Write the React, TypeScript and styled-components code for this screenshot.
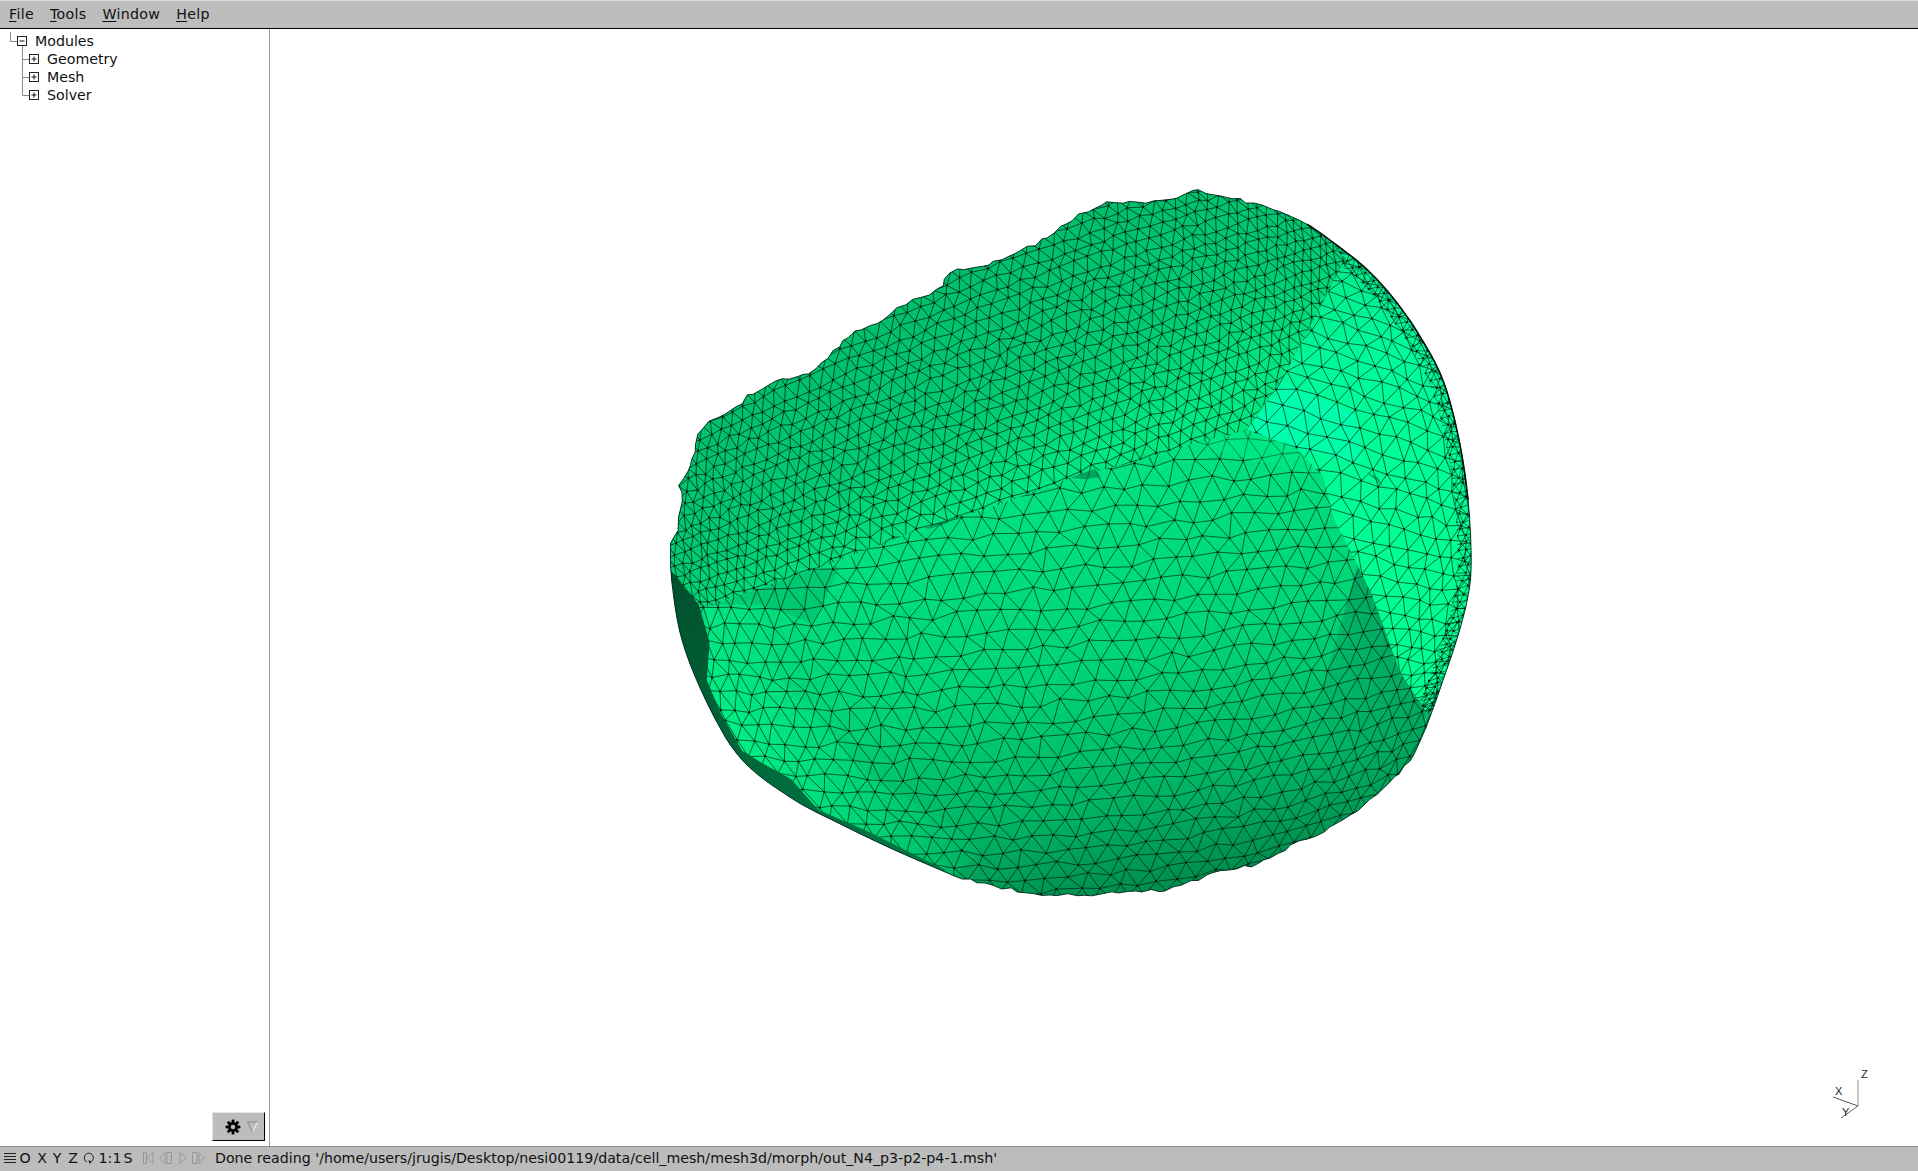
import React, { useMemo } from "react";
import styled, { createGlobalStyle } from "styled-components";

type P = [number, number];

const GlobalStyle = createGlobalStyle`
  html, body { margin: 0; padding: 0; height: 100%; background: #fff; overflow: hidden; }
  #root { height: 100%; }
`;

const Window = styled.div`
  height: 100vh;
  display: flex;
  flex-direction: column;
  font-family: "DejaVu Sans", sans-serif;
  font-size: 14.2px;
  color: #111;
`;

const MenuBar = styled.div`
  flex: none;
  height: 29px;
  box-sizing: border-box;
  display: flex;
  align-items: center;
  gap: 16px;
  padding: 0 0 1px 9px;
  background: #bdbdbd;
  border-top: 1px solid #dedede;
  border-bottom: 1px solid #000;
`;

const MenuItem = styled.span`
  line-height: 26px;
  letter-spacing: 0.3px;
`;

const Key = styled.span`
  text-decoration: underline;
  text-underline-offset: 2px;
`;

const Body = styled.div`
  flex: 1;
  min-height: 0;
  display: flex;
`;

const Side = styled.aside`
  flex: none;
  width: 270px;
  box-sizing: border-box;
  border-right: 1px solid #9c9c9c;
  display: flex;
  flex-direction: column;
  padding: 3px 4px 5px 0;
`;

const Tree = styled.div`
  display: flex;
  flex-direction: column;
`;

const TreeRow = styled.div`
  height: 18px;
  display: flex;
  align-items: center;
  line-height: 18px;
`;

const TreeIcon = styled.svg`
  flex: none;
  display: block;
  margin-right: 8px;
`;

const GearButton = styled.button`
  margin-top: auto;
  align-self: flex-end;
  width: 53px;
  height: 29px;
  box-sizing: border-box;
  padding: 0 6px 0 12px;
  display: flex;
  align-items: center;
  justify-content: space-between;
  background: #bdbdbd;
  border: 1px solid;
  border-color: #e4e4e4 #000 #000 #e4e4e4;
`;

const Canvas = styled.main`
  flex: 1;
  min-width: 0;
  background: #fff;
`;

const Scene = styled.svg`
  display: block;
  width: 100%;
  height: 100%;
`;

const StatusBar = styled.footer`
  flex: none;
  height: 25px;
  box-sizing: border-box;
  display: flex;
  align-items: center;
  padding: 0 0 2px 3px;
  background: #bcbcbc;
  border-top: 1px solid #8d8d8d;
`;

const StatusGlyph = styled.span<{ $w: number; $gap?: number }>`
  flex: none;
  width: ${(p) => p.$w}px;
  margin-left: ${(p) => p.$gap ?? 0}px;
  line-height: 22px;
  display: flex;
  justify-content: center;
  align-items: center;
`;

const StatusText = styled.span`
  margin-left: 10px;
  white-space: nowrap;
  line-height: 22px;
`;

const AxisLabel = styled.text`
  font-family: "Liberation Sans", sans-serif;
  font-size: 11px;
  fill: #222;
`;

function rng(seed: number) {
  let s = seed >>> 0;
  return () => {
    s = (s + 0x6d2b79f5) >>> 0;
    let t = s;
    t = Math.imul(t ^ (t >>> 15), t | 1);
    t ^= t + Math.imul(t ^ (t >>> 7), t | 61);
    return ((t ^ (t >>> 14)) >>> 0) / 4294967296;
  };
}

const Z = (pts: P[]): P[] => pts.map(([x, y]) => [650 + x / 1.842, 170 + y / 2.118]);
const str = (pts: P[]) => pts.map((p) => `${p[0].toFixed(1)},${p[1].toFixed(1)}`).join(" ");

function rough(pts: P[], amp: number, seed: number): P[] {
  const r = rng(seed);
  const out: P[] = [];
  for (let i = 0; i < pts.length - 1; i++) {
    const [a, b] = [pts[i], pts[i + 1]];
    const n = Math.max(1, Math.round(Math.hypot(b[0] - a[0], b[1] - a[1]) / 8));
    for (let k = 0; k < n; k++) {
      const t = k / n;
      out.push([a[0] + (b[0] - a[0]) * t + (r() - 0.5) * amp, a[1] + (b[1] - a[1]) * t + (r() - 0.5) * amp]);
    }
  }
  out.push(pts[pts.length - 1]);
  return out;
}

function smooth(pts: P[]): P[] {
  const out: P[] = [];
  for (let i = 0; i < pts.length - 1; i++) {
    const p0 = pts[Math.max(0, i - 1)];
    const p1 = pts[i];
    const p2 = pts[i + 1];
    const p3 = pts[Math.min(pts.length - 1, i + 2)];
    for (let k = 0; k < 6; k++) {
      const t = k / 6;
      const c = (a: number, b: number, d: number, e: number) =>
        0.5 * (2 * b + (d - a) * t + (2 * a - 5 * b + 4 * d - e) * t * t + (3 * b - a - 3 * d + e) * t * t * t);
      out.push([c(p0[0], p1[0], p2[0], p3[0]), c(p0[1], p1[1], p2[1], p3[1])]);
    }
  }
  out.push(pts[pts.length - 1]);
  return out;
}

const TOP: P[] = Z([[38,790],[55,750],[52,735],[60,700],[55,670],[70,640],[85,580],[95,545],[125,525],[155,505],[180,480],[230,450],[295,430],[340,385],[375,340],[420,325],[470,285],[540,245],[550,215],[610,205],[660,185],[720,150],[780,105],[830,70],[900,70],[970,62],[1000,42],[1040,50],[1100,68],[1160,88]]);
const RIGHT: P[] = Z([[1160,88],[1210,115],[1260,155],[1320,210],[1375,280],[1425,365],[1462,450],[1488,560],[1505,680],[1512,790],[1510,880],[1490,980],[1455,1100],[1430,1180]]);
const BOTTOM: P[] = Z([[1410,1240],[1360,1300],[1300,1360],[1240,1400],[1180,1430],[1120,1470],[1040,1490],[950,1525],[880,1530],[800,1535],[720,1535],[650,1520],[560,1495]]);
const LEFT: P[] = Z([[560,1495],[450,1440],[350,1385],[260,1330],[170,1250],[110,1140],[60,1000],[40,870],[38,790]]);

const SMOOTH_RIGHT = smooth(RIGHT);
const OUTLINE: P[] = [...rough(TOP, 3.8, 11), ...SMOOTH_RIGHT, ...rough(BOTTOM, 3.2, 23), ...smooth(LEFT)];

const inset = (pts: P[], k: number): P[] =>
  pts.map(([x, y]) => [1130 + (x - 1130) * k, 520 + (y - 520) * k] as P).reverse();
const EDGE_BAND: P[] = [...SMOOTH_RIGHT, ...inset(SMOOTH_RIGHT, 0.96)];

const UPPER: P[] = Z([[0,700],[0,0],[1240,0],[1240,130],[1280,190],[1230,300],[1170,430],[1100,550],[1000,580],[870,625],[780,650],[640,710],[500,760],[340,830],[190,890],[110,925],[90,920],[40,850],[0,850]]);
const RIGHTFACE: P[] = Z([[1240,130],[1240,0],[1600,0],[1600,1200],[1430,1150],[1380,1060],[1330,900],[1300,830],[1260,740],[1240,650],[1190,590],[1100,550],[1170,430],[1230,300],[1280,190]]);
const DARK: P[] = Z([[0,840],[40,850],[90,920],[110,1000],[105,1080],[130,1150],[170,1230],[205,1255],[260,1290],[310,1355],[400,1400],[540,1480],[565,1510],[300,1500],[0,1200]]);
const GLOW: P[] = Z([[100,930],[190,890],[240,1080],[400,1280],[620,1430],[560,1495],[540,1480],[400,1400],[310,1355],[260,1290],[205,1255],[170,1230],[130,1150],[105,1080],[110,1000]]);
const SHADE: P[] = Z([[1305,830],[1430,1150],[1400,1300],[1180,1300],[1250,1050]]);
const HILITE: P[] = Z([[1100,550],[1170,450],[1300,520],[1310,620],[1190,590]]);
const CREASE: P[] = Z([[1100,550],[1190,590],[1240,650],[1130,620],[1000,580]]);
const DENT: P[] = Z([[120,920],[290,850],[350,840],[300,960],[200,920]]);
const NOTCHES: P[][] = [
  Z([[775,652],[820,632],[830,650],[800,655]]),
  Z([[505,758],[555,738],[548,748],[515,760]]),
  Z([[1320,640],[1350,670],[1340,650]]),
];

function mesh(o: { spacing: number; angle: number; cx: number; cy: number; R: number; seed: number }) {
  const { spacing, angle, cx, cy, R, seed } = o;
  const r = rng(seed);
  const ca = Math.cos(angle);
  const sa = Math.sin(angle);
  const rowH = spacing * 0.866;
  const N = Math.ceil((R * 1.7) / spacing);
  const pts = new Map<string, P | null>();
  const key = (i: number, j: number) => `${i}:${j}`;
  for (let j = -N; j <= N; j++) {
    for (let i = -N; i <= N; i++) {
      const lx = (i + (j & 1) * 0.5) * spacing + (r() - 0.5) * spacing * 0.36;
      const ly = j * rowH + (r() - 0.5) * spacing * 0.36;
      const dx = lx * ca - ly * sa;
      const dy = lx * sa + ly * ca;
      const d = Math.hypot(dx, dy);
      const a = d / R;
      if (a >= 1.5) {
        pts.set(key(i, j), null);
        continue;
      }
      const s = d === 0 ? 1 : (R * Math.sin(a)) / d;
      pts.set(key(i, j), [cx + dx * s, cy + dy * s]);
    }
  }
  let edges = "";
  let nodes = "";
  const f = (p: P) => `${p[0].toFixed(1)} ${p[1].toFixed(1)}`;
  for (let j = -N; j <= N; j++) {
    for (let i = -N; i <= N; i++) {
      const p = pts.get(key(i, j));
      if (!p) continue;
      nodes += `M${f(p)}h0`;
      const odd = j & 1;
      const nb = [key(i + 1, j), key(i + (odd ? 1 : 0), j + 1), key(i + (odd ? 0 : -1), j + 1)];
      for (const k of nb) {
        const q = pts.get(k);
        if (q) edges += `M${f(p)}L${f(q)}`;
      }
    }
  }
  return { edges, nodes };
}

function Mesh({ data, w = 0.75 }: { data: { edges: string; nodes: string }; w?: number }) {
  return (
    <g fill="none" stroke="#04140c">
      <path d={data.edges} strokeWidth={w} strokeOpacity={0.85} />
      <path d={data.nodes} strokeWidth={2} strokeLinecap="round" />
    </g>
  );
}

function Body3D() {
  const upper = useMemo(() => mesh({ spacing: 14.5, angle: -0.36, cx: 1010, cy: 430, R: 430, seed: 5 }), []);
  const main = useMemo(() => mesh({ spacing: 22.5, angle: -0.08, cx: 1060, cy: 530, R: 470, seed: 9 }), []);
  const right = useMemo(() => mesh({ spacing: 21, angle: 1.3, cx: 1250, cy: 490, R: 290, seed: 17 }), []);
  const band = useMemo(() => mesh({ spacing: 9, angle: 0.9, cx: 1300, cy: 400, R: 500, seed: 31 }), []);
  return (
    <>
      <defs>
        <clipPath id="outline"><polygon points={str(OUTLINE)} /></clipPath>
        <clipPath id="upper"><polygon points={str(UPPER)} /></clipPath>
        <clipPath id="right"><polygon points={str(RIGHTFACE)} /></clipPath>
        <clipPath id="dark"><polygon points={str(DARK)} /></clipPath>
        <clipPath id="band"><polygon points={str(EDGE_BAND)} /></clipPath>
        <linearGradient id="mainFill" gradientUnits="userSpaceOnUse" x1="1030" y1="440" x2="1130" y2="890">
          <stop offset="0" stopColor="#00e782" />
          <stop offset="0.5" stopColor="#00d576" />
          <stop offset="0.8" stopColor="#00b564" />
          <stop offset="1" stopColor="#008f4e" />
        </linearGradient>
        <linearGradient id="upperFill" gradientUnits="userSpaceOnUse" x1="900" y1="280" x2="1010" y2="500">
          <stop offset="0" stopColor="#00bd6a" />
          <stop offset="0.65" stopColor="#00cc72" />
          <stop offset="1" stopColor="#00e880" />
        </linearGradient>
        <linearGradient id="rightFill" gradientUnits="userSpaceOnUse" x1="1290" y1="260" x2="1440" y2="600">
          <stop offset="0" stopColor="#00e98a" />
          <stop offset="0.35" stopColor="#00fb9a" />
          <stop offset="1" stopColor="#00ff90" />
        </linearGradient>
        <linearGradient id="glowFill" gradientUnits="userSpaceOnUse" x1="720" y1="760" x2="860" y2="660">
          <stop offset="0" stopColor="#00f58a" />
          <stop offset="1" stopColor="#00e07c" stopOpacity="0" />
        </linearGradient>
        <linearGradient id="shadeFill" gradientUnits="userSpaceOnUse" x1="1420" y1="650" x2="1310" y2="740">
          <stop offset="0" stopColor="#009a58" stopOpacity="0.75" />
          <stop offset="1" stopColor="#009a58" stopOpacity="0" />
        </linearGradient>
        <linearGradient id="darkFill" gradientUnits="userSpaceOnUse" x1="680" y1="560" x2="960" y2="890">
          <stop offset="0" stopColor="#004f2c" />
          <stop offset="0.5" stopColor="#006a3c" />
          <stop offset="1" stopColor="#007a44" />
        </linearGradient>
      </defs>
      <g clipPath="url(#outline)">
        <rect x="600" y="150" width="950" height="800" fill="url(#mainFill)" />
        <polygon points={str(GLOW)} fill="url(#glowFill)" />
        <polygon points={str(SHADE)} fill="url(#shadeFill)" />
        <polygon points={str(DENT)} fill="#00b868" opacity={0.55} />
        <Mesh data={main} />
        <g clipPath="url(#dark)">
          <polygon points={str(DARK)} fill="url(#darkFill)" />
          <Mesh data={band} w={0.7} />
        </g>
        <g clipPath="url(#right)">
          <polygon points={str(RIGHTFACE)} fill="url(#rightFill)" />
          <polygon points={str(HILITE)} fill="#00ffb0" opacity={0.8} />
          <Mesh data={right} />
          <g clipPath="url(#band)">
            <Mesh data={band} w={0.65} />
          </g>
        </g>
        <polygon points={str(CREASE)} fill="#00f088" opacity={0.35} />
        <g clipPath="url(#upper)">
          <polygon points={str(UPPER)} fill="url(#upperFill)" />
          <Mesh data={upper} w={0.8} />
        </g>
        {NOTCHES.map((n, i) => (
          <polygon key={i} points={str(n)} fill="#007a48" opacity={0.6} />
        ))}
      </g>
      <polygon points={str(OUTLINE)} fill="none" stroke="#03241a" strokeWidth={0.9} />
      <polyline points={str(SMOOTH_RIGHT.slice(6, 50))} fill="none" stroke="#02130c" strokeWidth={1.6} />
    </>
  );
}

function Axes() {
  return (
    <g>
      <line x1="1858" y1="1080" x2="1858" y2="1106" stroke="#bcbcbc" strokeWidth={1.6} />
      <line x1="1833" y1="1097" x2="1858" y2="1106" stroke="#555" strokeWidth={1} />
      <line x1="1841" y1="1118" x2="1858" y2="1106" stroke="#666" strokeWidth={1} />
      <AxisLabel x="1861" y="1078">Z</AxisLabel>
      <AxisLabel x="1835" y="1095">X</AxisLabel>
      <AxisLabel x="1842" y="1116">Y</AxisLabel>
    </g>
  );
}

function BranchIcon({ root, last }: { root?: boolean; last?: boolean }) {
  const plus = !root;
  const w = root ? 27 : 39;
  const bx = root ? 17.5 : 29.5;
  return (
    <TreeIcon width={w} height={18} viewBox={`0 0 ${w} 18`}>
      {root ? (
        <path d="M10.5 0V9.5H17M22.5 14V18" stroke="#8a8a8a" fill="none" />
      ) : (
        <path d={`M22.5 0V${last ? 9.5 : 18}M22.5 9.5H29`} stroke="#8a8a8a" fill="none" />
      )}
      <rect x={bx} y={4.5} width={9} height={9} fill="#fff" stroke="#222" />
      <path d={`M${bx + 2} 9H${bx + 7}${plus ? `M${bx + 4.5} 6.5V11.5` : ""}`} stroke="#111" fill="none" />
    </TreeIcon>
  );
}

function Gear() {
  const teeth = Array.from({ length: 8 }, (_, i) => i * 45);
  return (
    <svg width="16" height="16" viewBox="0 0 16 16">
      <circle cx="8" cy="8" r="3.6" fill="none" stroke="#000" strokeWidth="2.6" />
      {teeth.map((a) => (
        <rect key={a} x="6.6" y="0.6" width="2.8" height="3.4" fill="#000" transform={`rotate(${a} 8 8)`} />
      ))}
    </svg>
  );
}

function StepIcon({ d, w }: { d: string; w: number }) {
  return (
    <svg width={w} height="14" viewBox={`0 0 ${w} 14`}>
      <path d={d} fill="none" stroke="#969696" />
    </svg>
  );
}

export default function App() {
  return (
    <Window>
      <GlobalStyle />
      <MenuBar>
        <MenuItem><Key>F</Key>ile</MenuItem>
        <MenuItem><Key>T</Key>ools</MenuItem>
        <MenuItem><Key>W</Key>indow</MenuItem>
        <MenuItem><Key>H</Key>elp</MenuItem>
      </MenuBar>
      <Body>
        <Side>
          <Tree>
            <TreeRow><BranchIcon root />Modules</TreeRow>
            <TreeRow><BranchIcon />Geometry</TreeRow>
            <TreeRow><BranchIcon />Mesh</TreeRow>
            <TreeRow><BranchIcon last />Solver</TreeRow>
          </Tree>
          <GearButton aria-label="options">
            <Gear />
            <svg width="11" height="12" viewBox="0 0 11 12">
              <path d="M10.5 1L5.5 11.5" fill="none" stroke="#f4f4f4" />
              <path d="M5.5 11.5L0.5 1H10.5" fill="none" stroke="#858585" />
            </svg>
          </GearButton>
        </Side>
        <Canvas>
          <Scene viewBox="270 29 1648 1117" preserveAspectRatio="xMinYMin meet">
            <Body3D />
            <Axes />
          </Scene>
        </Canvas>
      </Body>
      <StatusBar>
        <StatusGlyph $w={13}>
          <svg width="12" height="12" viewBox="0 0 12 12">
            <path d="M0 1.5H12M0 4.5H12M0 7.5H12M0 10.5H12" stroke="#222" />
          </svg>
        </StatusGlyph>
        <StatusGlyph $w={12} $gap={3}>O</StatusGlyph>
        <StatusGlyph $w={10} $gap={6}>X</StatusGlyph>
        <StatusGlyph $w={10} $gap={5}>Y</StatusGlyph>
        <StatusGlyph $w={10} $gap={6}>Z</StatusGlyph>
        <StatusGlyph $w={12} $gap={5}>
          <svg width="12" height="13" viewBox="0 0 12 13">
            <path d="M4 10A4.6 4.6 0 1 1 8.4 9.6" fill="none" stroke="#222" />
            <path d="M5.5 8L8.8 9.4 6.5 12Z" fill="#222" />
          </svg>
        </StatusGlyph>
        <StatusGlyph $w={20} $gap={5}>1:1</StatusGlyph>
        <StatusGlyph $w={10} $gap={3}>S</StatusGlyph>
        <StatusGlyph $w={11} $gap={10}><StepIcon w={11} d="M.5 1.5H3.5V12.5H.5ZM10 1.5V12.5L4 7Z" /></StatusGlyph>
        <StatusGlyph $w={13} $gap={5}><StepIcon w={13} d="M.5 7L6 1.5V12.5ZM8 1.5H12.5V12.5H8Z" /></StatusGlyph>
        <StatusGlyph $w={8} $gap={7}><StepIcon w={8} d="M1 1.5L7 7 1 12.5Z" /></StatusGlyph>
        <StatusGlyph $w={13} $gap={5}><StepIcon w={13} d="M.5 1.5H5V12.5H.5ZM7 1.5L12.5 7 7 12.5Z" /></StatusGlyph>
        <StatusText>Done reading '/home/users/jrugis/Desktop/nesi00119/data/cell_mesh/mesh3d/morph/out_N4_p3-p2-p4-1.msh'</StatusText>
      </StatusBar>
    </Window>
  );
}
